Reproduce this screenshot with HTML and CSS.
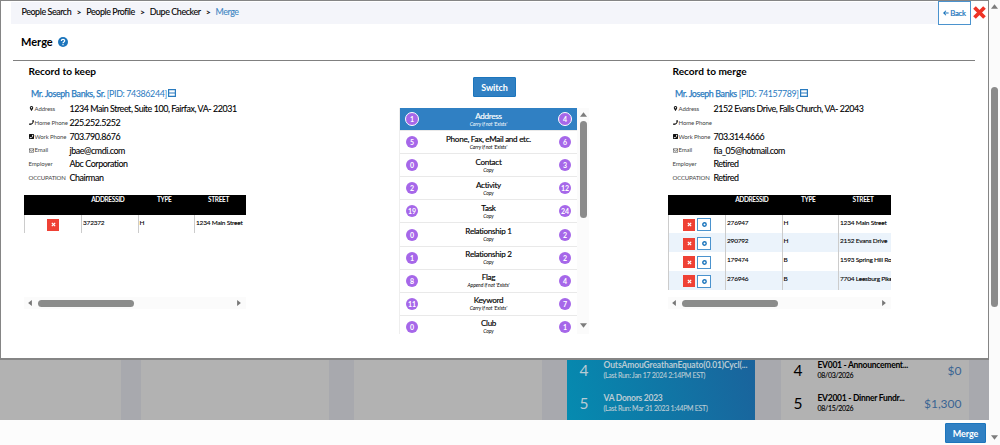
FILE: index.html
```
<!DOCTYPE html>
<html lang="en">
<head>
<meta charset="utf-8">
<title>Merge</title>
<link rel="stylesheet" href="styles.css">
</head>
<body>
<svg width="0" height="0" class="defs">
  <symbol id="pin" viewBox="0 0 10 10"><path fill-rule="evenodd" d="M5 0a3.500 3.500 0 0 0-3.500 3.500C1.500 6 5 10 5 10s3.500-4 3.500-6.500A3.500 3.500 0 0 0 5 0zm0 2a1.500 1.500 0 1 1 0 3 1.500 1.500 0 0 1 0-3z"/></symbol>
  <symbol id="phone" viewBox="0 0 10 10"><path d="M7.500 0 10 .8C10 6 6 10 .8 10L0 7.500l2.600-1.200 1.200 1.200c1.700-.8 2.900-2 3.700-3.700L6.300 2.600z"/></symbol>
  <symbol id="phonebox" viewBox="0 0 10 10"><path fill-rule="evenodd" d="M1 0h8l1 1v8l-1 1H1L0 9V1zM6.500 1.500 6 3l.8.800C6.300 5 5 6.300 3.800 6.800L3 6l-1.500.5.5 2C5.500 8.500 8.500 5.500 8.500 2z"/></symbol>
  <symbol id="mail" viewBox="0 0 10 10"><path d="M.5 1.500h9v7h-9zM.5 3 5 6l4.500-3" fill="none" stroke="currentColor"/></symbol>
  <symbol id="minus" viewBox="0 0 8 8"><path d="M.6.6h6.800v6.800H.6zM1 4h6" fill="none" stroke="currentColor" stroke-width="1.200"/></symbol>
  <symbol id="cross" viewBox="0 0 12 12"><path d="M2 2l8 8M10 2l-8 8" fill="none" stroke="currentColor" stroke-width="3"/></symbol>
  <symbol id="gear" viewBox="0 0 10 10"><circle cx="5" cy="5" r="3.400" fill="none" stroke="currentColor" stroke-width="2.800"/></symbol>
  <symbol id="tri" viewBox="0 0 8 8"><path d="M0 6.500 4 1.500l4 5z"/></symbol>
</svg>
<div class="page">
  <main class="main">
    <section class="dialog">
      <header class="top">
        <nav class="crumbs"><span>People Search</span><i>&gt;</i><span>People Profile</span><i>&gt;</i><span>Dupe Checker</span><i>&gt;</i><span class="here">Merge</span></nav>
        <button class="back"><svg viewBox="0 0 8 8"><path d="M7.500 4H1.500M4 1 1 4l3 3" fill="none" stroke="currentColor" stroke-width="1.400"/></svg>Back</button>
        <svg class="close"><use href="#cross"/></svg>
      </header>
      <h1 class="title">Merge <svg viewBox="0 0 10 10"><circle cx="5" cy="5" r="5" fill="#1c75bc"/><path d="M3.300 3.900C3.300 1.800 6.700 1.800 6.700 3.800 6.700 5 5 4.900 5 6.200M5 7v1.200" fill="none" stroke="#fff" stroke-width="1.200"/></svg></h1>
      <div class="columns">
        <section class="record">
          <h2>Record to keep</h2>
          <a class="person"><span><b>Mr. Joseph Banks, Sr.</b> [PID: 74386244]</span><svg><use href="#minus"/></svg></a>
          <dl class="facts">
            <dt><svg><use href="#pin"/></svg>Address</dt><dd>1234 Main Street, Suite 100, Fairfax, VA- 22031</dd>
            <dt><svg><use href="#phone"/></svg>Home Phone</dt><dd>225.252.5252</dd>
            <dt><svg><use href="#phonebox"/></svg>Work Phone</dt><dd>703.790.8676</dd>
            <dt><svg><use href="#mail"/></svg>Email</dt><dd>jbae@cmdi.com</dd>
            <dt>Employer</dt><dd>Abc Corporation</dd>
            <dt class="caps">OCCUPATION</dt><dd>Chairman</dd>
          </dl>
          <div class="table">
            <div class="tr head"><span></span><span>ADDRESSID</span><span>TYPE</span><span>STREET</span></div>
            <div class="tr"><span class="acts"><b class="del"><svg><use href="#cross"/></svg></b></span><span>372372</span><span>H</span><span>1234 Main Street</span></div>
          </div>
          <div class="hbar"><svg class="left"><use href="#tri"/></svg><i></i><svg class="right"><use href="#tri"/></svg></div>
        </section>
        <section class="center">
          <button class="btn switch">Switch</button>
          <div class="picker">
            <ul class="list">
              <li class="on"><b>1</b><p>Address<em>Carry if not 'Exists'</em></p><b>4</b></li>
              <li><b>5</b><p>Phone, Fax, eMail and etc.<em>Carry if not 'Exists'</em></p><b>6</b></li>
              <li><b>0</b><p>Contact<em>Copy</em></p><b>3</b></li>
              <li><b>2</b><p>Activity<em>Copy</em></p><b>12</b></li>
              <li><b>19</b><p>Task<em>Copy</em></p><b>24</b></li>
              <li><b>0</b><p>Relationship 1<em>Copy</em></p><b>2</b></li>
              <li><b>1</b><p>Relationship 2<em>Copy</em></p><b>2</b></li>
              <li><b>8</b><p>Flag<em>Append if not 'Exists'</em></p><b>4</b></li>
              <li><b>11</b><p>Keyword<em>Carry if not 'Exists'</em></p><b>7</b></li>
              <li><b>0</b><p>Club<em>Copy</em></p><b>1</b></li>
            </ul>
            <div class="vbar"><svg><use href="#tri"/></svg><i></i><svg class="down"><use href="#tri"/></svg></div>
          </div>
        </section>
        <section class="record">
          <h2>Record to merge</h2>
          <a class="person"><span><b>Mr. Joseph Banks</b> [PID: 74157789]</span><svg><use href="#minus"/></svg></a>
          <dl class="facts">
            <dt><svg><use href="#pin"/></svg>Address</dt><dd>2152 Evans Drive, Falls Church, VA- 22043</dd>
            <dt><svg><use href="#phone"/></svg>Home Phone</dt><dd></dd>
            <dt><svg><use href="#phonebox"/></svg>Work Phone</dt><dd>703.314.4666</dd>
            <dt><svg><use href="#mail"/></svg>Email</dt><dd>fia_05@hotmail.com</dd>
            <dt>Employer</dt><dd>Retired</dd>
            <dt class="caps">OCCUPATION</dt><dd>Retired</dd>
          </dl>
          <div class="table">
            <div class="tr head"><span></span><span>ADDRESSID</span><span>TYPE</span><span>STREET</span></div>
            <div class="tr"><span class="acts"><b class="del"><svg><use href="#cross"/></svg></b><b class="cfg"><svg><use href="#gear"/></svg></b></span><span>276947</span><span>H</span><span>1234 Main Street</span></div>
            <div class="tr alt"><span class="acts"><b class="del"><svg><use href="#cross"/></svg></b><b class="cfg"><svg><use href="#gear"/></svg></b></span><span>290792</span><span>H</span><span>2152 Evans Drive</span></div>
            <div class="tr"><span class="acts"><b class="del"><svg><use href="#cross"/></svg></b><b class="cfg"><svg><use href="#gear"/></svg></b></span><span>179474</span><span>B</span><span>1593 Spring Hill Ro</span></div>
            <div class="tr alt"><span class="acts"><b class="del"><svg><use href="#cross"/></svg></b><b class="cfg"><svg><use href="#gear"/></svg></b></span><span>276946</span><span>B</span><span>7704 Leesburg Pike</span></div>
          </div>
          <div class="hbar"><svg class="left"><use href="#tri"/></svg><i></i><svg class="right"><use href="#tri"/></svg></div>
        </section>
      </div>
    </section>
    <section class="dash">
      <div></div><div></div><div></div>
      <div class="blue">
        <div class="item"><strong>4</strong><p><b class="long">OutsAmouGreathanEquato(0.01)Cycl(...</b><small>(Last Run: Jan 17 2024 2:14PM EST)</small></p></div>
        <div class="item"><strong>5</strong><p><b>VA Donors 2023</b><small>(Last Run: Mar 31 2023 1:44PM EST)</small></p></div>
      </div>
      <div class="events">
        <div class="item"><strong>4</strong><p><b>EV001 - Announcement...</b><small>08/03/2026</small></p><span>$0</span></div>
        <div class="item"><strong>5</strong><p><b>EV2001 - Dinner Fundr...</b><small>08/15/2026</small></p><span>$1,300</span></div>
      </div>
    </section>
    <footer class="foot"><button class="btn">Merge</button></footer>
  </main>
  <div class="vbar pagebar"><svg><use href="#tri"/></svg><i></i><svg class="down"><use href="#tri"/></svg></div>
</div>
</body>
</html>
```
FILE: styles.css
```
* { box-sizing: border-box; margin: 0; padding: 0; }
body { width: 1000px; height: 445px; overflow: hidden; background: #fcfcfc; color: #000; font-family: Lato, "Liberation Sans", sans-serif; font-size: 8.9px; }
.defs { position: absolute; }
svg { display: block; fill: currentColor; flex: none; }
button { font-family: inherit; }
.page { display: flex; height: 445px; }
.main { width: 989px; display: flex; flex-direction: column; }
.dialog { height: 360px; border: 1px solid #858585; border-bottom-width: 2px; background: #fff; }

.top { height: 24px; display: flex; padding-left: 10px; }
.crumbs { width: 927px; height: 22px; margin-top: 1px; padding-left: 10.5px; background: #f4f5fa; display: flex; line-height: 20px; font-size: 8.9px; letter-spacing: -.4px; white-space: nowrap; -webkit-text-stroke: .1px; }
.crumbs i { font-style: normal; font-size: 8px; font-weight: 700; width: 15px; text-align: center; }
.crumbs .here { color: #3f87c4; }
.back { width: 33px; height: 24px; border: 1px solid #4b93ce; background: #fff; color: #1c75bc; font-size: 7.8px; letter-spacing: -.25px; -webkit-text-stroke: .2px; display: flex; align-items: center; justify-content: center; gap: 1px; }
.back svg { width: 6px; height: 6px; }
.close { width: 15px; height: 15px; margin: 4px 0 0 1px; color: #ef3326; }
.title { height: 36px; margin-left: 12px; width: 962px; padding: 10px 0 0 8px; border-bottom: 1px solid #808080; font-size: 11px; line-height: 14px; display: flex; }
.title svg { width: 10px; height: 10px; margin: 2px 0 0 5px; }

.columns { display: grid; grid-template-columns: 222px 422px 223px; justify-content: start; padding-left: 23px; }
.record h2 { height: 20px; padding: 3px 0 0 4.5px; font-size: 10.1px; line-height: 14px; }
.person { height: 20px; padding: 5px 0 0 7px; display: flex; color: #2a7bbf; line-height: 15px; letter-spacing: -.38px; white-space: nowrap; }
.person b { font-weight: 400; -webkit-text-stroke: .25px; }
.person svg { width: 8px; height: 8px; margin: 3px 0 0 1px; }
.facts { display: grid; grid-template-columns: 41px 1fr; grid-auto-rows: 13.85px; padding: 1px 0 0 4.5px; height: 94px; line-height: 14px; }
.facts dt { display: flex; align-items: center; gap: 1px; font-size: 6px; letter-spacing: -.1px; color: #444; white-space: nowrap; }
.facts dt svg { width: 5px; height: 5px; color: #111; }
.facts .caps { letter-spacing: -.15px; }
.facts dd { letter-spacing: -.42px; -webkit-text-stroke: .1px; white-space: nowrap; }
.table { height: 102px; overflow: hidden; }
.tr { height: 18.8px; display: grid; grid-template-columns: 57px 56.5px 56.5px 1fr; font-size: 6.5px; letter-spacing: -.2px; -webkit-text-stroke: .1px; white-space: nowrap; overflow: hidden; }
.tr > span { border-left: 1px solid #ccc; padding: 3px 0 0 1px; line-height: 9px; overflow: hidden; }
.tr.head { height: 19.5px; background: #000; color: #fff; font-weight: 700; letter-spacing: -.35px; text-align: center; -webkit-text-stroke: 0; }
.tr.head > span { border: 0; padding: 0 3px 0 0; }
.alt { background: #ebf3fb; }
.tr .acts { display: flex; align-items: center; justify-content: center; gap: 2px; padding: 2px 0 0; }
.acts b { display: flex; align-items: center; justify-content: center; width: 12px; height: 12px; }
.acts .del { background: #ef4135; color: #fff; }
.acts .cfg { width: 14px; height: 13px; border: 1px solid #4b93ce; background: #fff; color: #1c75bc; }
.acts svg { width: 5px; height: 5px; }
.hbar { height: 12px; background: #fbfbfb; display: flex; align-items: center; padding: 0 4px 0 3px; color: #777; }
.hbar svg { width: 6px; height: 6px; }
.hbar .left { transform: rotate(-90deg); }
.hbar .right { transform: rotate(90deg); margin-left: auto; }
.hbar i { width: 96px; height: 7px; border-radius: 4px; background: #8b8c8b; margin-left: 4.5px; }

.center { padding: 16px 0 0 153px; }
.btn { border: 1px solid #1c75bc; background: #3080c3; color: #fff; font-size: 9px; font-weight: 700; letter-spacing: -.1px; border-radius: 1px; }
.switch { display: block; width: 43px; height: 20px; margin-left: 74px; }
.picker { display: flex; margin-top: 11px; height: 226px; }
.list { width: 178px; height: 226px; overflow: hidden; list-style: none; border-left: 1px solid #eee; }
.list li { height: 23.1px; display: flex; justify-content: space-between; align-items: center; padding: 0 6px; border-bottom: 1px solid #e9e9e9; }
.list b { width: 12px; height: 12px; border-radius: 50%; background: #a667e9; color: #fff; font-size: 7px; line-height: 12px; text-align: center; }
.list p { text-align: center; font-size: 8.1px; letter-spacing: -.28px; line-height: 9px; padding-top: 0; -webkit-text-stroke: .15px; }
.list em { display: block; font-size: 5px; line-height: 6px; letter-spacing: -.05px; -webkit-text-stroke: 0; }
.list .on { background: #3080c3; color: #fff; }
.list .on b { width: 14px; height: 14px; margin: 0 -1px; border: 1px solid #fff; }
.vbar { width: 12px; background: #fbfbfb; color: #7c7c7c; display: flex; flex-direction: column; align-items: center; padding: 3px 0 5px; }
.vbar svg { width: 7px; height: 7px; }
.vbar i { width: 7px; height: 97px; margin-top: 3px; border-radius: 4px; background: #8b8b8b; }
.vbar .down { transform: rotate(180deg); margin-top: auto; }
.vbar.pagebar { width: 11px; padding: 3px 0 4px; }
.pagebar i { height: 220px; margin-top: 77px; }

.dash { height: 60px; display: grid; grid-template-columns: 121px 20px 187.5px 25.5px 188px 25px 188px 26px 187.5px; background: #a8a9ae; }
.dash > div { background: #b2b2b2; }
.dash > :nth-child(1) { grid-column: 1; }
.dash > :nth-child(2) { grid-column: 3; }
.dash > :nth-child(3) { grid-column: 5; }
.dash > .blue { grid-column: 7; background: linear-gradient(75deg, #058bb0, #1a639c); color: #b9cbd4; }
.dash > .events { grid-column: 9; }
.item { height: 33px; display: flex; padding: 0 7px 0 12.5px; }
.item strong { flex: none; width: 24px; font-size: 15.5px; font-weight: 400; line-height: 21px; }
.item p { white-space: nowrap; }
.item b { display: block; font-size: 8.5px; line-height: 11px; letter-spacing: -.27px; }
.item .long { letter-spacing: -.13px; }
.item small { display: block; font-size: 7px; line-height: 9.5px; letter-spacing: -.3px; -webkit-text-stroke: .1px; }
.item span { margin-left: auto; font-size: 12px; line-height: 21px; color: #3a6592; }
.foot { height: 25px; background: #fcfcfc; padding: 3px 3px 0 0; display: flex; justify-content: flex-end; }
.foot .btn { width: 41px; height: 20px; }
```
